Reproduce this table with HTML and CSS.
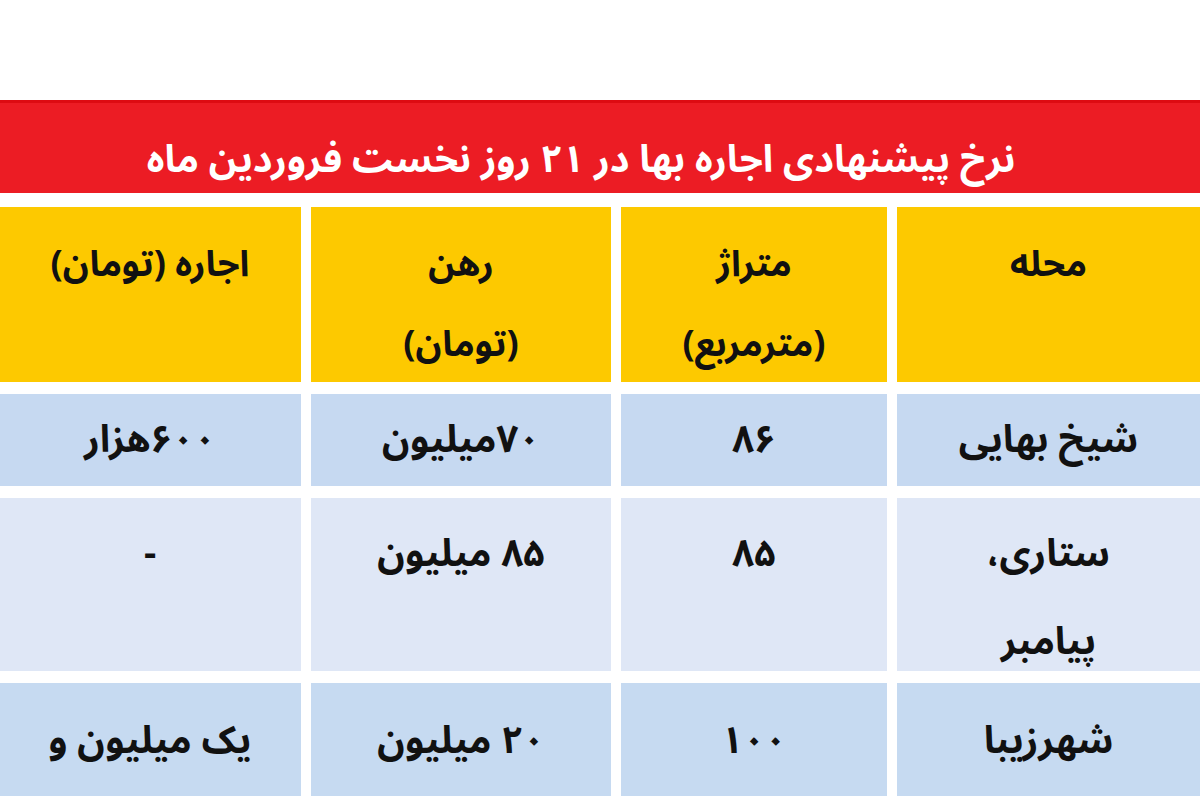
FILE: index.html
```html
<!DOCTYPE html>
<html lang="fa" dir="rtl">
<head>
<meta charset="utf-8">
<title>نرخ پیشنهادی اجاره بها</title>
<link rel="stylesheet" href="styles.css">
</head>
<body>
<div class="page">
  <div class="banner"><h1 class="banner-title">نرخ پیشنهادی اجاره بها در ۲۱ روز نخست فروردین ماه</h1></div>
  <div class="table">
    <div class="cell head">محله</div>
    <div class="cell head">متراژ<br>(مترمربع)</div>
    <div class="cell head">رهن<br>(تومان)</div>
    <div class="cell head">اجاره (تومان)</div>

    <div class="cell r1">شیخ بهایی</div>
    <div class="cell r1">۸۶</div>
    <div class="cell r1">۷۰میلیون</div>
    <div class="cell r1">۶۰۰هزار</div>

    <div class="cell r2"><span class="line">ستاری،</span><span class="line">پیامبر</span></div>
    <div class="cell r2">۸۵</div>
    <div class="cell r2">۸۵ میلیون</div>
    <div class="cell r2">-</div>

    <div class="cell r3">شهرزیبا</div>
    <div class="cell r3">۱۰۰</div>
    <div class="cell r3">۲۰ میلیون</div>
    <div class="cell r3">یک میلیون و</div>
  </div>
</div>
</body>
</html>
```

FILE: styles.css
```css
html, body {
  margin: 0;
  padding: 0;
  overflow: hidden;
  background: #ffffff;
}

body {
  font-family: "Noto Sans Arabic", "Noto Naskh Arabic", "DejaVu Sans", sans-serif;
  width: 1200px;
  height: 800px;
}

.page {
  padding-top: 100px;
}

.banner {
  height: 90px;
  box-sizing: content-box;
  background: #ec1c24;
  border-top: 3px solid #dd0b12;
  display: flex;
  align-items: center;
  justify-content: center;
  padding-right: 38px;
}

.banner-title {
  margin: 0;
  padding-top: 24px;
  color: #ffffff;
  font-size: 38px;
  font-weight: bold;
  line-height: 46px;
}

.table {
  margin-top: 14px;
  display: grid;
  grid-template-columns: 303px 266px 300px 302px;
  grid-template-rows: 175px 92px 173px 113px;
  column-gap: 10px;
  row-gap: 12px;
}

.cell {
  text-align: center;
  font-weight: bold;
  color: #111111;
  box-sizing: border-box;
}

.head {
  background: #fdc900;
  font-size: 36px;
  line-height: 80px;
  padding-top: 18px;
}

.r1,
.r2,
.r3 {
  font-size: 38px;
  line-height: 84px;
}

.r1 {
  background: #c6d9f1;
  padding-top: 4px;
}

.r2 {
  background: #dfe7f6;
  padding-top: 14px;
  display: flex;
  flex-direction: column;
  align-items: center;
}

.line {
  display: block;
  flex-shrink: 0;
  line-height: 84px;
}

.line + .line {
  margin-top: 8px;
  line-height: 76px;
}

.r3 {
  background: #c6daf1;
  padding-top: 16px;
}
```
